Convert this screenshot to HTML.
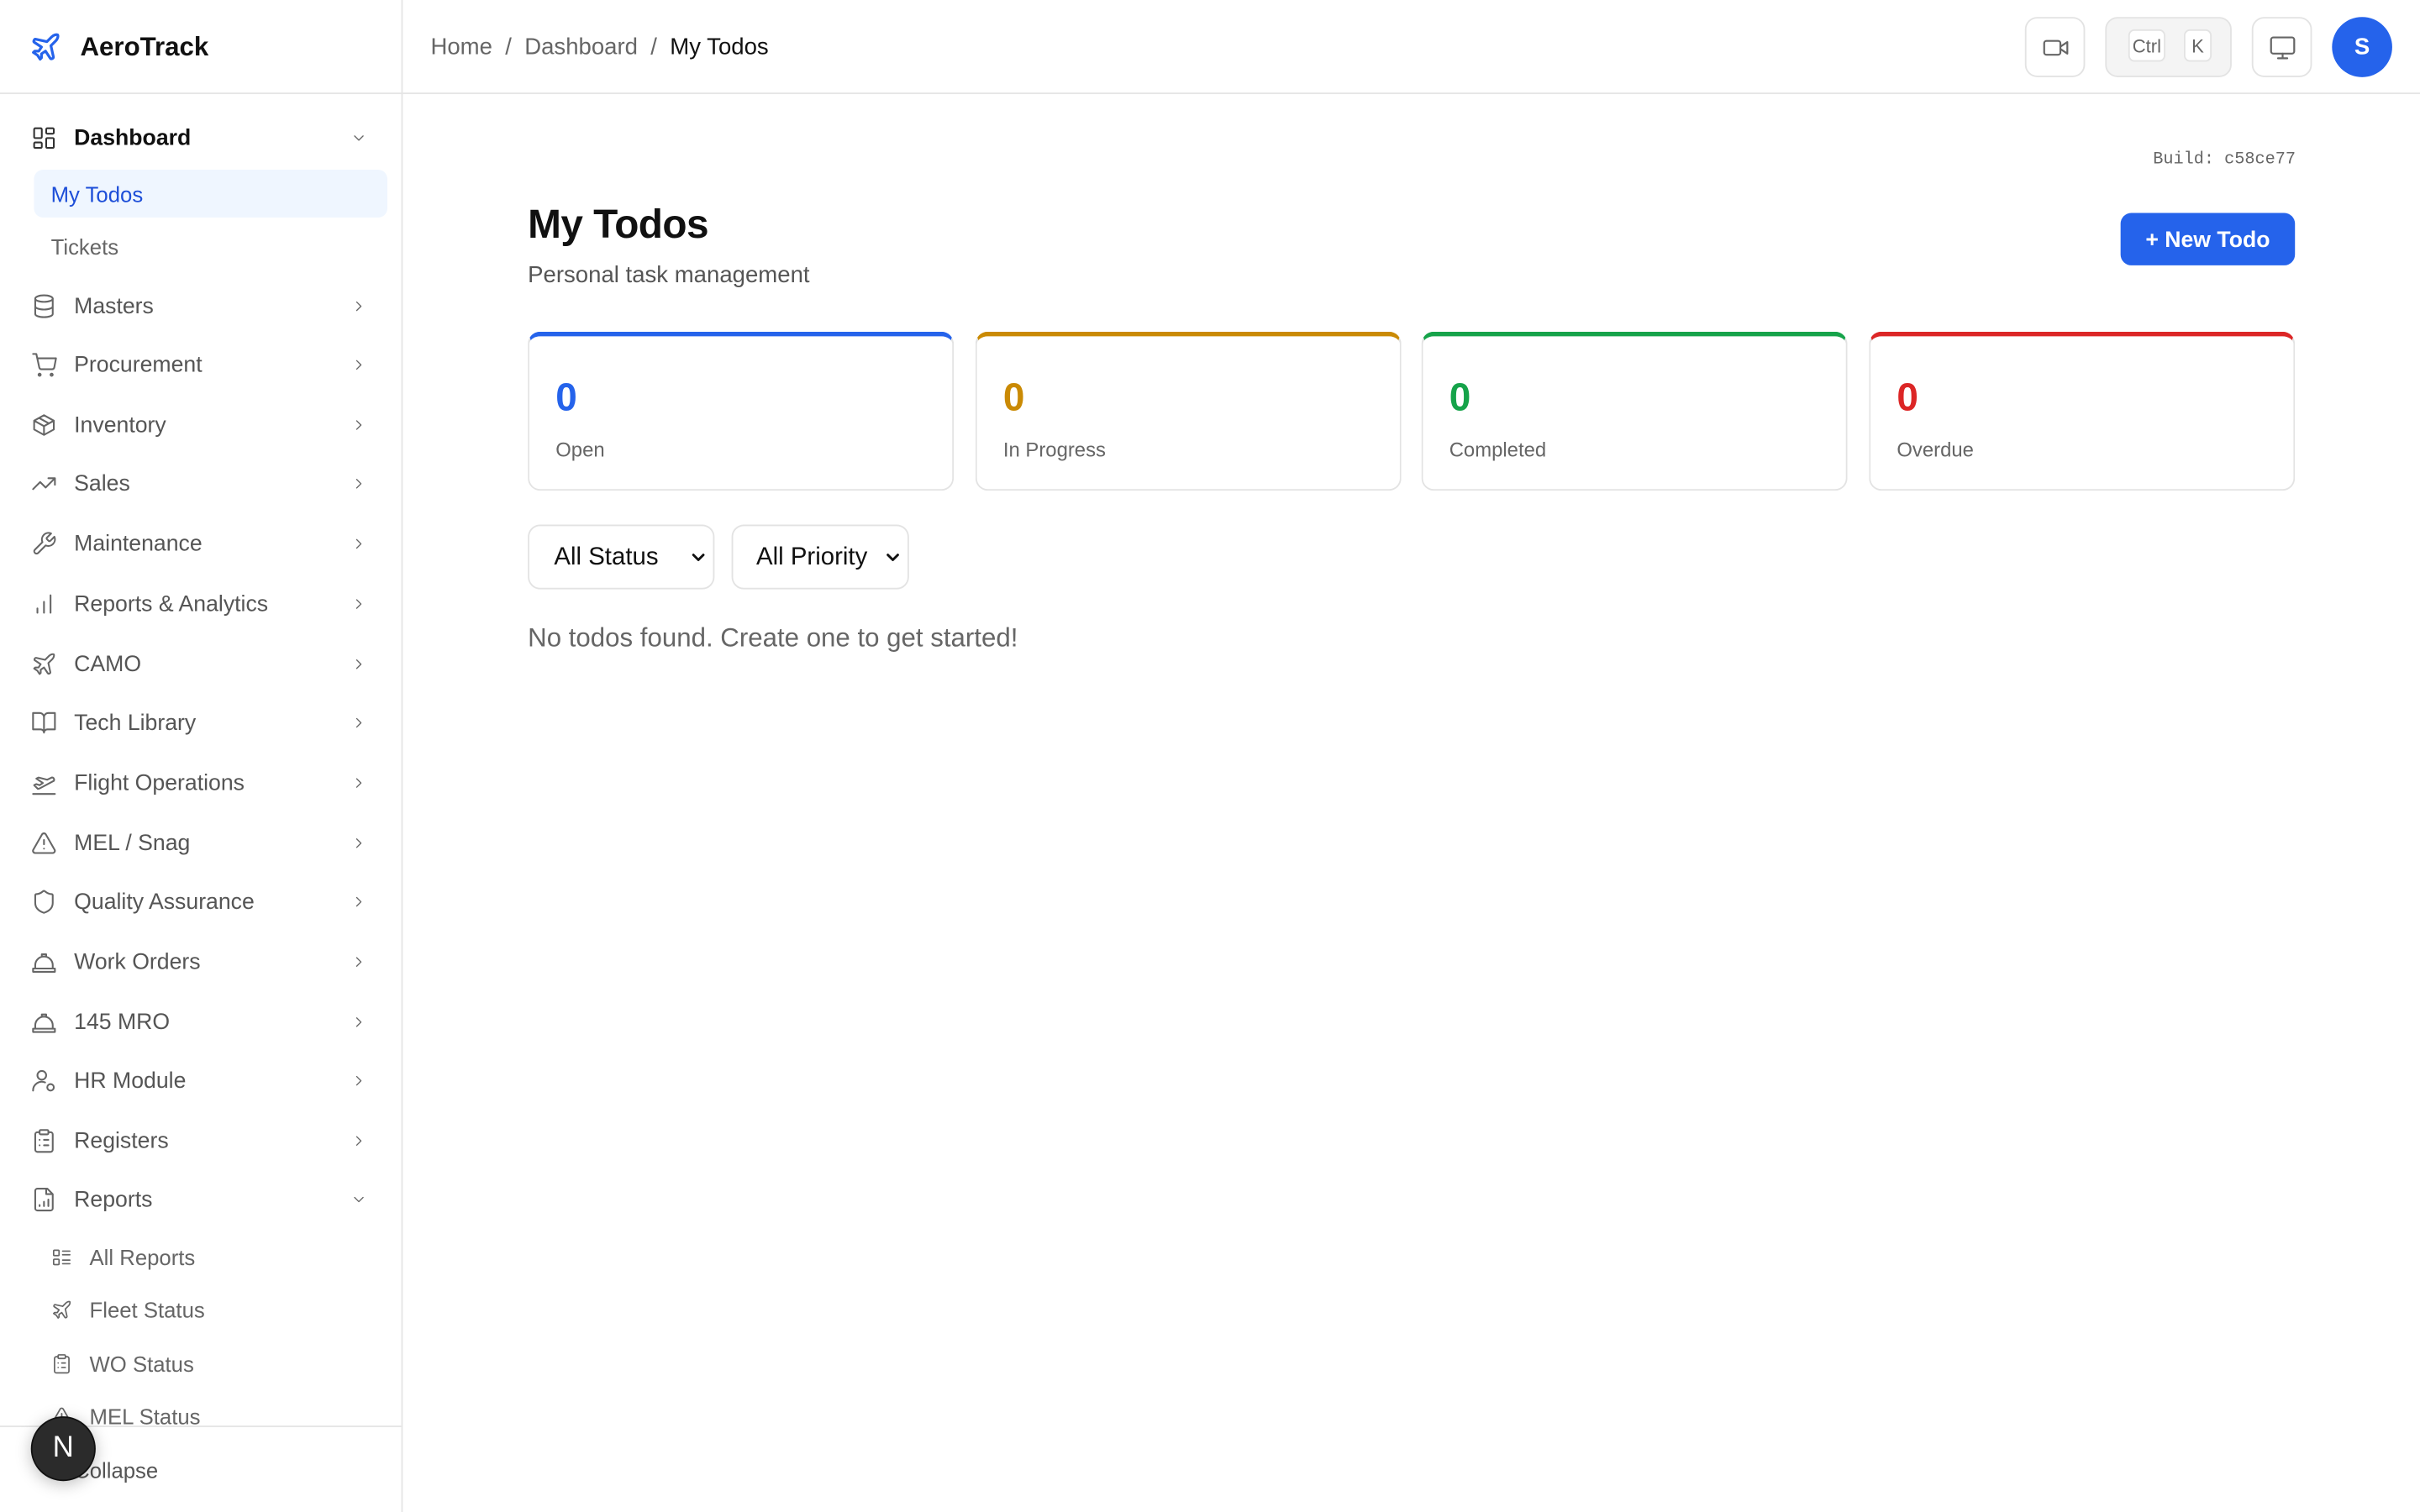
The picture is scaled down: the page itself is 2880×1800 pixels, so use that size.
<!DOCTYPE html>
<html><head><meta charset="utf-8"><style>
*{box-sizing:border-box;margin:0;padding:0}
html,body{width:2880px;height:1800px;overflow:hidden;background:#fff}
#r{position:absolute;left:0;top:0;width:1568px;height:980px;transform:scale(1.83673);transform-origin:0 0;font-family:"Liberation Sans",sans-serif;color:#222}
.a{position:absolute}
.nav{position:absolute;left:20px;display:flex;align-items:center;font-size:14.5px;color:#555;width:222px;height:20px;margin-top:1.5px}
.nav svg{width:17px;height:17px;margin-right:11px;flex:none}
.nav .ch{position:absolute;right:4px;width:11px;height:11px;margin:0}
.sub{position:absolute;left:33px;font-size:14px;color:#666;margin-top:1px}
.card{position:absolute;top:215px;width:276px;height:103px;border:1px solid #e3e3e3;border-radius:8px;border-top:3px solid}
.card .n{position:absolute;left:17px;top:26px;font-size:25px;font-weight:700}
.card .l{position:absolute;left:17px;top:66px;font-size:13px;color:#666}
.hb{position:absolute;top:11px;height:39px;border:1px solid #e3e3e3;border-radius:8px;background:#fff}
svg{fill:none;stroke:#666;stroke-width:1.6;stroke-linecap:round;stroke-linejoin:round}
</style></head><body><div id="r">
<div class="a" style="left:260px;top:0;width:1px;height:980px;background:#e5e5e5"></div>
<div class="a" style="left:0;top:60px;width:1568px;height:1px;background:#e5e5e5"></div>
<svg class="a" style="left:19px;top:20px;width:21px;height:21px;stroke:#2563eb;stroke-width:2" viewBox="0 0 24 24"><path d="M17.8 19.2 16 11l3.5-3.5C21 6 21.5 4 21 3c-1-.5-3 0-4.5 1.5L13 8 4.8 6.2c-.5-.1-.9.1-1.1.5l-.3.5c-.2.5-.1 1 .3 1.3L9 12l-2 3H4l-1 1 3 2 2 3 1-1v-3l3-2 3.5 5.3c.3.4.8.5 1.3.3l.5-.2c.4-.3.6-.7.5-1.2z"/></svg>
<div class="a" style="left:52px;top:21px;font-size:17px;font-weight:700;color:#111">AeroTrack</div>
<div class="a" style="left:279px;top:22px;font-size:15px;color:#666">Home&nbsp; / &nbsp;Dashboard&nbsp; / &nbsp;<span style="color:#111">My Todos</span></div>
<div class="hb" style="left:1312px;width:39px"><svg class="a" style="left:10px;top:10px;width:18px;height:18px" viewBox="0 0 24 24"><rect x="2" y="6" width="14" height="12" rx="2"/><path d="m16 13 6 4V7l-6 4"/></svg></div>
<div class="hb" style="left:1364px;width:82px;background:#f4f4f4">
<div class="a" style="left:14px;top:7px;width:24px;height:21px;border:1px solid #e3e3e3;border-radius:4px;background:#fff;font-size:12px;color:#666;text-align:center;line-height:20px">Ctrl</div>
<div class="a" style="left:50px;top:7px;width:18px;height:21px;border:1px solid #e3e3e3;border-radius:4px;background:#fff;font-size:12px;color:#666;text-align:center;line-height:20px">K</div></div>
<div class="hb" style="left:1459px;width:39px"><svg class="a" style="left:10px;top:10px;width:18px;height:18px" viewBox="0 0 24 24"><rect x="2" y="3" width="20" height="14" rx="2"/><path d="M8 21h8M12 17v4"/></svg></div>
<div class="a" style="left:1511px;top:11px;width:39px;height:39px;border-radius:50%;background:#2563eb;color:#fff;font-weight:700;font-size:15px;text-align:center;line-height:40px">S</div>

<div class="nav" style="top:78px;color:#111;font-weight:600"><svg viewBox="0 0 24 24" style="stroke:#333"><rect x="3" y="3" width="7" height="9" rx="1"/><rect x="14" y="3" width="7" height="5" rx="1"/><rect x="14" y="12" width="7" height="9" rx="1"/><rect x="3" y="16" width="7" height="5" rx="1"/></svg>Dashboard<svg class="ch" viewBox="0 0 24 24"><path d="m6 9 6 6 6-6"/></svg></div>
<div class="a" style="left:22px;top:110px;width:229px;height:31px;background:#eff6ff;border-radius:6px"></div>
<div class="sub" style="top:117px;color:#1d4ed8">My Todos</div>
<div class="sub" style="top:151px">Tickets</div>
<div class="nav" style="top:187px"><svg viewBox="0 0 24 24"><ellipse cx="12" cy="5" rx="8" ry="3"/><path d="M4 5v14c0 1.7 3.6 3 8 3s8-1.3 8-3V5M4 12c0 1.7 3.6 3 8 3s8-1.3 8-3"/></svg>Masters<svg class="ch" viewBox="0 0 24 24"><path d="m9 6 6 6-6 6"/></svg></div>
<div class="nav" style="top:225px"><svg viewBox="0 0 24 24"><circle cx="8" cy="21" r="1"/><circle cx="19" cy="21" r="1"/><path d="M2 2h3l2.7 12.4a2 2 0 0 0 2 1.6h9.7a2 2 0 0 0 2-1.6L23 6H6"/></svg>Procurement<svg class="ch" viewBox="0 0 24 24"><path d="m9 6 6 6-6 6"/></svg></div>
<div class="nav" style="top:264px"><svg viewBox="0 0 24 24"><path d="M21 8 12 3 3 8v8l9 5 9-5zM3 8l9 5 9-5M12 13v8M7.5 5.5l9 5"/></svg>Inventory<svg class="ch" viewBox="0 0 24 24"><path d="m9 6 6 6-6 6"/></svg></div>
<div class="nav" style="top:302px"><svg viewBox="0 0 24 24"><path d="m22 7-8.5 8.5-5-5L2 17M16 7h6v6"/></svg>Sales<svg class="ch" viewBox="0 0 24 24"><path d="m9 6 6 6-6 6"/></svg></div>
<div class="nav" style="top:341px"><svg viewBox="0 0 24 24"><path d="M14.7 6.3a1 1 0 0 0 0 1.4l1.6 1.6a1 1 0 0 0 1.4 0l3.8-3.8a6 6 0 0 1-7.9 7.9l-6.9 6.9a2.1 2.1 0 0 1-3-3l6.9-6.9a6 6 0 0 1 7.9-7.9z"/></svg>Maintenance<svg class="ch" viewBox="0 0 24 24"><path d="m9 6 6 6-6 6"/></svg></div>
<div class="nav" style="top:380px"><svg viewBox="0 0 24 24"><path d="M12 20V10M18 20V4M6 20v-4"/></svg>Reports &amp; Analytics<svg class="ch" viewBox="0 0 24 24"><path d="m9 6 6 6-6 6"/></svg></div>
<div class="nav" style="top:419px"><svg viewBox="0 0 24 24"><path d="M17.8 19.2 16 11l3.5-3.5C21 6 21.5 4 21 3c-1-.5-3 0-4.5 1.5L13 8 4.8 6.2c-.5-.1-.9.1-1.1.5l-.3.5c-.2.5-.1 1 .3 1.3L9 12l-2 3H4l-1 1 3 2 2 3 1-1v-3l3-2 3.5 5.3c.3.4.8.5 1.3.3l.5-.2c.4-.3.6-.7.5-1.2z"/></svg>CAMO<svg class="ch" viewBox="0 0 24 24"><path d="m9 6 6 6-6 6"/></svg></div>
<div class="nav" style="top:457px"><svg viewBox="0 0 24 24"><path d="M2 3h6a4 4 0 0 1 4 4v14a3 3 0 0 0-3-3H2zM22 3h-6a4 4 0 0 0-4 4v14a3 3 0 0 1 3-3h7z"/></svg>Tech Library<svg class="ch" viewBox="0 0 24 24"><path d="m9 6 6 6-6 6"/></svg></div>
<div class="nav" style="top:496px"><svg viewBox="0 0 24 24"><path d="M2 22h20M6.4 17.4 3 14l2-1 3 1 3-2-6-4 2-1 8 2 4-2a2 2 0 0 1 2 3l-13 7z"/></svg>Flight Operations<svg class="ch" viewBox="0 0 24 24"><path d="m9 6 6 6-6 6"/></svg></div>
<div class="nav" style="top:535px"><svg viewBox="0 0 24 24"><path d="m21.7 18-8-14a2 2 0 0 0-3.5 0l-8 14A2 2 0 0 0 4 21h16a2 2 0 0 0 1.7-3zM12 9v4M12 17h.01"/></svg>MEL / Snag<svg class="ch" viewBox="0 0 24 24"><path d="m9 6 6 6-6 6"/></svg></div>
<div class="nav" style="top:573px"><svg viewBox="0 0 24 24"><path d="M20 13c0 5-3.5 7.5-7.7 9a1 1 0 0 1-.7 0C7.5 20.5 4 18 4 13V6a1 1 0 0 1 1-1c2 0 4.5-1.2 6.2-2.7a1.2 1.2 0 0 1 1.5 0C14.5 3.8 17 5 19 5a1 1 0 0 1 1 1z"/></svg>Quality Assurance<svg class="ch" viewBox="0 0 24 24"><path d="m9 6 6 6-6 6"/></svg></div>
<div class="nav" style="top:612px"><svg viewBox="0 0 24 24"><path d="M2 18h20v3H2zM4 18v-3a8 8 0 0 1 16 0v3M10 7V5h4v2"/></svg>Work Orders<svg class="ch" viewBox="0 0 24 24"><path d="m9 6 6 6-6 6"/></svg></div>
<div class="nav" style="top:651px"><svg viewBox="0 0 24 24"><path d="M2 18h20v3H2zM4 18v-3a8 8 0 0 1 16 0v3M10 7V5h4v2"/></svg>145 MRO<svg class="ch" viewBox="0 0 24 24"><path d="m9 6 6 6-6 6"/></svg></div>
<div class="nav" style="top:689px"><svg viewBox="0 0 24 24"><circle cx="10" cy="7" r="4"/><path d="M2 21a8 8 0 0 1 11-7.5"/><circle cx="18" cy="18" r="3"/></svg>HR Module<svg class="ch" viewBox="0 0 24 24"><path d="m9 6 6 6-6 6"/></svg></div>
<div class="nav" style="top:728px"><svg viewBox="0 0 24 24"><rect x="8" y="2" width="8" height="4" rx="1"/><path d="M16 4h2a2 2 0 0 1 2 2v14a2 2 0 0 1-2 2H6a2 2 0 0 1-2-2V6a2 2 0 0 1 2-2h2M12 11h4M12 16h4M8 11h.01M8 16h.01"/></svg>Registers<svg class="ch" viewBox="0 0 24 24"><path d="m9 6 6 6-6 6"/></svg></div>
<div class="nav" style="top:766px"><svg viewBox="0 0 24 24"><path d="M15 2H6a2 2 0 0 0-2 2v16a2 2 0 0 0 2 2h12a2 2 0 0 0 2-2V7zM14 2v5h5M8 18v-1M12 18v-4M16 18v-6"/></svg>Reports<svg class="ch" viewBox="0 0 24 24"><path d="m6 9 6 6 6-6"/></svg></div>
<div class="nav" style="top:803px;left:33px;font-size:14px;color:#666"><svg viewBox="0 0 24 24" style="width:14px;height:14px"><rect x="3" y="4" width="6" height="6" rx="1"/><rect x="3" y="14" width="6" height="6" rx="1"/><path d="M13 5h8M13 9h8M13 15h8M13 19h8"/></svg>All Reports</div>
<div class="nav" style="top:837px;left:33px;font-size:14px;color:#666"><svg viewBox="0 0 24 24" style="width:14px;height:14px"><path d="M17.8 19.2 16 11l3.5-3.5C21 6 21.5 4 21 3c-1-.5-3 0-4.5 1.5L13 8 4.8 6.2c-.5-.1-.9.1-1.1.5l-.3.5c-.2.5-.1 1 .3 1.3L9 12l-2 3H4l-1 1 3 2 2 3 1-1v-3l3-2 3.5 5.3c.3.4.8.5 1.3.3l.5-.2c.4-.3.6-.7.5-1.2z"/></svg>Fleet Status</div>
<div class="nav" style="top:872px;left:33px;font-size:14px;color:#666"><svg viewBox="0 0 24 24" style="width:14px;height:14px"><rect x="8" y="2" width="8" height="4" rx="1"/><path d="M16 4h2a2 2 0 0 1 2 2v14a2 2 0 0 1-2 2H6a2 2 0 0 1-2-2V6a2 2 0 0 1 2-2h2M12 11h4M12 16h4M8 11h.01M8 16h.01"/></svg>WO Status</div>
<div class="nav" style="top:906px;left:33px;font-size:14px;color:#666"><svg viewBox="0 0 24 24" style="width:14px;height:14px"><path d="m21.7 18-8-14a2 2 0 0 0-3.5 0l-8 14A2 2 0 0 0 4 21h16a2 2 0 0 0 1.7-3zM12 9v4M12 17h.01"/></svg>MEL Status</div>
<div class="a" style="left:0;top:924px;width:260px;height:56px;background:#fff;border-top:1px solid #e5e5e5"></div>
<div class="a" style="left:48px;top:945px;font-size:14px;color:#555">Collapse</div>
<div class="a" style="left:20px;top:918px;width:42px;height:42px;border-radius:50%;background:#2b2b2b;border:1.5px solid #111;box-shadow:0 2px 10px rgba(0,0,0,.25);color:#fff;font-size:19px;text-align:center;line-height:39px">N</div>

<div class="a" style="left:1395px;top:98px;font-family:'Liberation Mono',monospace;font-size:11px;color:#666">Build: c58ce77</div>
<div class="a" style="left:342px;top:130px;font-size:26px;font-weight:600;color:#111;letter-spacing:-0.3px">My Todos</div>
<div class="a" style="left:342px;top:170px;font-size:15px;color:#555">Personal task management</div>
<div class="a" style="left:1374px;top:138px;width:113px;height:34px;background:#2563eb;border-radius:7px;color:#fff;font-size:14.5px;font-weight:600;text-align:center;line-height:36px">+ New Todo</div>

<div class="card" style="left:342px;border-top-color:#2563eb"><div class="n" style="color:#2563eb">0</div><div class="l">Open</div></div>
<div class="card" style="left:632px;border-top-color:#ca8a04"><div class="n" style="color:#ca8a04">0</div><div class="l">In Progress</div></div>
<div class="card" style="left:921px;border-top-color:#16a34a"><div class="n" style="color:#16a34a">0</div><div class="l">Completed</div></div>
<div class="card" style="left:1211px;border-top-color:#dc2626"><div class="n" style="color:#dc2626">0</div><div class="l">Overdue</div></div>

<div class="a" style="left:342px;top:340px;width:121px;height:42px;border:1px solid #e3e3e3;border-radius:8px;font-size:16px;color:#111;padding:12px 0 0 16px">All Status<svg class="a" style="left:104px;top:15px;width:11px;height:11px;stroke:#111;stroke-width:3.5" viewBox="0 0 24 24"><path d="m5 8 7 7 7-7"/></svg></div>
<div class="a" style="left:474px;top:340px;width:115px;height:42px;border:1px solid #e3e3e3;border-radius:8px;font-size:16px;color:#111;padding:12px 0 0 15px">All Priority<svg class="a" style="left:98px;top:15px;width:11px;height:11px;stroke:#111;stroke-width:3.5" viewBox="0 0 24 24"><path d="m5 8 7 7 7-7"/></svg></div>
<div class="a" style="left:342px;top:404px;font-size:17px;color:#666">No todos found. Create one to get started!</div>
</div></body></html>
